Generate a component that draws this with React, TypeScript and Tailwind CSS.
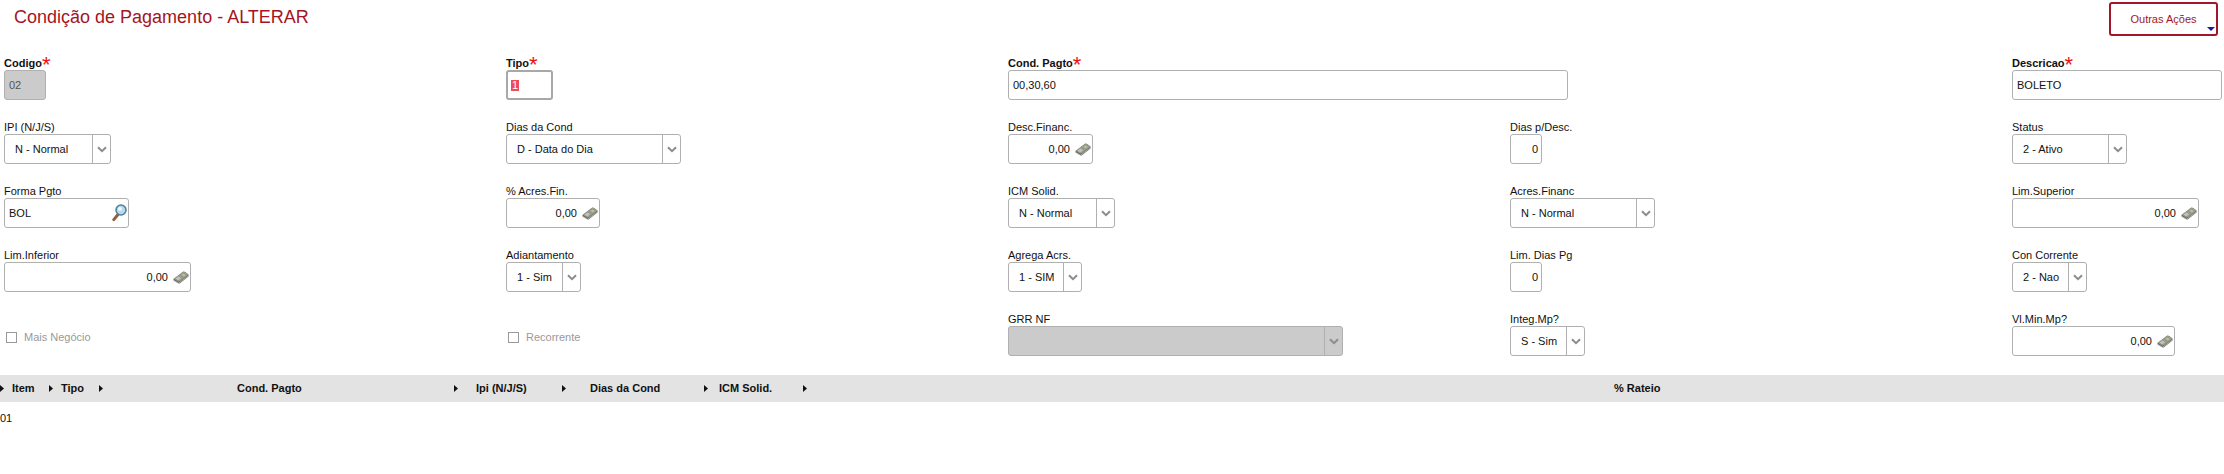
import type { ReactNode } from 'react';

const MoneyIcon = () => (
    <svg width="16" height="13" viewBox="0 0 16 13" className="shrink-0">
        <path d="M0.5 8 L10 0.8 Q11 0.3 12 0.9 L15.5 3.6 L15.5 5.6 L7 12.3 Q6 12.8 5 12.3 L0.5 9.6 Z" fill="#66665f" />
        <path d="M0.8 7.8 L10 0.9 Q11 0.4 12 1 L15.4 3.6 L6.6 10.4 Q5.8 10.8 5 10.4 Z" fill="#9a9a90" />
        <path d="M8.6 3.8 L10.4 2.4 L12.8 3.9 L11 5.4 Z" fill="#a6cf8a" />
        <path d="M2.6 7.8 L5.6 5.6 L8 7.2 L5.4 9.2 Z" fill="#c4c4bb" />
        <path d="M1 9.6 L5.6 12.2 L15 5" fill="none" stroke="#d8d8d0" strokeWidth="0.6" />
    </svg>
);

const SearchIcon = () => (
    <svg width="15" height="18" viewBox="0 0 15 18" className="shrink-0">
        <path d="M6 10.5 L1.8 15.6" stroke="#8f5f3f" strokeWidth="3" strokeLinecap="round" />
        <circle cx="9" cy="6" r="5" fill="#b9d9ee" stroke="#4a7f9f" strokeWidth="1.5" />
        <circle cx="8" cy="4.8" r="1.9" fill="#f2fafe" />
    </svg>
);

const Chevron = () => (
    <svg width="10" height="7" viewBox="0 0 10 7">
        <path d="M1 1.2 L5 5.2 L9 1.2" fill="none" stroke="#8c8c8c" strokeWidth="2" />
    </svg>
);

const SortArrow = () => (
    <svg width="4" height="7" viewBox="0 0 4 7" className="shrink-0">
        <path d="M0 0 L4 3.5 L0 7 Z" fill="#111" />
    </svg>
);

const Field = ({ label, required, children }: { label: string; required?: boolean; children: ReactNode }) => (
    <div>
        <div className={`h-[14px] flex items-center text-[11px] leading-[14px] text-[#111] ${required ? 'font-bold' : ''}`}>
            {label}
            {required && <span className="text-[22px] leading-[14px] font-normal text-[#f01010] mt-[4px]">*</span>}
        </div>
        {children}
    </div>
);

const boxClass = 'h-[30px] flex items-center border border-[#b0b0b0] rounded-[3px] text-[11px] text-[#111]';

const TextBox = ({ value, className }: { value: string; className: string }) => (
    <div className={`${boxClass} px-1 ${className}`}>{value}</div>
);

const MoneyBox = ({ className }: { className: string }) => (
    <div className={`${boxClass} justify-end gap-[5px] pr-[1px] ${className}`}>
        0,00
        <MoneyIcon />
    </div>
);

const Select = ({ value, className }: { value?: string; className: string }) => (
    <div className={`${boxClass} ${className}`}>
        <div className="flex-1 pl-[10px] whitespace-nowrap">{value}</div>
        <div className="w-[18px] h-full flex items-center justify-center border-l border-[#b0b0b0]">
            <Chevron />
        </div>
    </div>
);

const Check = ({ label }: { label: string }) => (
    <div className="h-full flex items-center gap-[7px] pl-[2px] pt-[7px] text-[11px] text-[#999]">
        <div className="w-[11px] h-[11px] border border-[#999] bg-white" />
        {label}
    </div>
);

const FormGrid = () => (
    <div className="grid grid-cols-[502px_502px_502px_502px_212px] gap-y-5 pl-1">
        <Field label="Codigo" required>
            <div className={`${boxClass} px-1 w-[42px] bg-[#cbcbcb] text-[#555]`}>02</div>
        </Field>
        <Field label="Tipo" required>
            <div className="h-[30px] w-[47px] flex items-center px-[3px] border-2 border-[#a8a8a8] rounded-[3px] text-[11px]">
                <span className="h-[11px] flex items-center px-px bg-[#ee4b57] text-white">1</span>
            </div>
        </Field>
        <div className="col-span-2">
            <Field label="Cond. Pagto" required>
                <TextBox value="00,30,60" className="w-[560px]" />
            </Field>
        </div>
        <Field label="Descricao" required>
            <TextBox value="BOLETO" className="w-[210px]" />
        </Field>

        <Field label="IPI (N/J/S)"><Select value="N - Normal" className="w-[107px]" /></Field>
        <Field label="Dias da Cond"><Select value="D - Data do Dia" className="w-[175px]" /></Field>
        <Field label="Desc.Financ."><MoneyBox className="w-[85px]" /></Field>
        <Field label="Dias p/Desc.">
            <div className={`${boxClass} justify-end pr-[3px] w-[32px]`}>0</div>
        </Field>
        <Field label="Status"><Select value="2 - Ativo" className="w-[115px]" /></Field>

        <Field label="Forma Pgto">
            <div className={`${boxClass} justify-between pl-1 pr-[1px] w-[125px]`}>
                BOL
                <SearchIcon />
            </div>
        </Field>
        <Field label="% Acres.Fin."><MoneyBox className="w-[94px]" /></Field>
        <Field label="ICM Solid."><Select value="N - Normal" className="w-[107px]" /></Field>
        <Field label="Acres.Financ"><Select value="N - Normal" className="w-[145px]" /></Field>
        <Field label="Lim.Superior"><MoneyBox className="w-[187px]" /></Field>

        <Field label="Lim.Inferior"><MoneyBox className="w-[187px]" /></Field>
        <Field label="Adiantamento"><Select value="1 - Sim" className="w-[75px]" /></Field>
        <Field label="Agrega Acrs."><Select value="1 - SIM" className="w-[74px]" /></Field>
        <Field label="Lim. Dias Pg">
            <div className={`${boxClass} justify-end pr-[3px] w-[32px]`}>0</div>
        </Field>
        <Field label="Con Corrente"><Select value="2 - Nao" className="w-[75px]" /></Field>

        <Check label="Mais Negócio" />
        <Check label="Recorrente" />
        <Field label="GRR NF"><Select className="w-[335px] bg-[#cbcbcb]" /></Field>
        <Field label="Integ.Mp?"><Select value="S - Sim" className="w-[75px]" /></Field>
        <Field label="Vl.Min.Mp?"><MoneyBox className="w-[163px]" /></Field>
    </div>
);

const TableHeader = () => (
    <div className="h-[27px] flex items-center bg-[#e3e3e3] text-[11px] font-bold text-[#111] whitespace-nowrap">
        <div className="w-[49px] flex items-center"><SortArrow /><span className="ml-2">Item</span></div>
        <div className="w-[50px] flex items-center"><SortArrow /><span className="ml-2">Tipo</span></div>
        <div className="w-[355px] flex items-center"><SortArrow /><span className="ml-[134px]">Cond. Pagto</span></div>
        <div className="w-[108px] flex items-center"><SortArrow /><span className="ml-[18px]">Ipi (N/J/S)</span></div>
        <div className="w-[142px] flex items-center"><SortArrow /><span className="ml-6">Dias da Cond</span></div>
        <div className="w-[99px] flex items-center"><SortArrow /><span className="ml-[11px]">ICM Solid.</span></div>
        <div className="flex items-center"><SortArrow /><span className="ml-[807px]">% Rateio</span></div>
    </div>
);

export default function App() {
    return (
        <div className="w-[2224px] h-[474px] bg-white overflow-hidden font-['Liberation_Sans',Arial,sans-serif]">
            <div className="h-[56px] flex items-start justify-between">
                <h1 className="pl-[14px] pt-[6px] text-[18px] leading-[22px] font-normal text-[#a5141f]">
                    Condição de Pagamento - ALTERAR
                </h1>
                <div className="relative mt-[2px] mr-[6px] w-[109px] h-[34px] flex items-center justify-center border-2 border-[#a0172a] rounded-[3px] text-[11px] text-[#a0172a]">
                    Outras Ações
                    <span className="absolute right-[1px] bottom-[3px] w-0 h-0 border-x-[4px] border-x-transparent border-t-[4px] border-t-[#1a1a9a]" />
                </div>
            </div>
            <FormGrid />
            <div className="mt-[19px]">
                <TableHeader />
                <div className="pt-[9px] text-[11px] leading-[14px] text-[#111]">01</div>
            </div>
        </div>
    );
}
